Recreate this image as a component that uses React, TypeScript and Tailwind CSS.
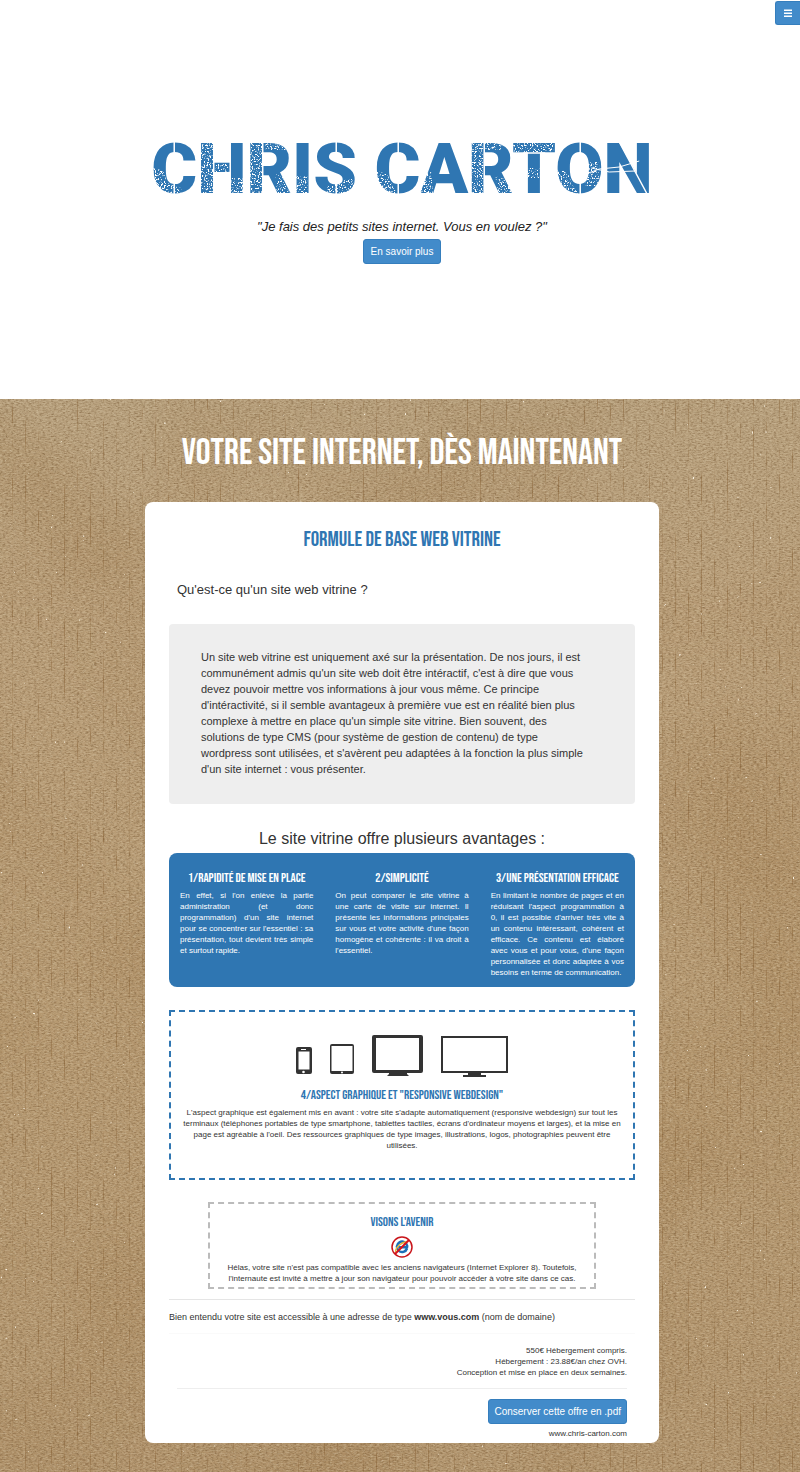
import type { ReactNode } from "react";

function Cardboard() {
  return (
    <svg aria-hidden="true" className="absolute inset-0 -z-10 h-full w-full">
      <defs>
        <linearGradient id="tone" x1="0" y1="0" x2="0" y2="1">
          <stop offset="0" stopColor="#b8a17e" />
          <stop offset="0.2" stopColor="#b99e79" />
          <stop offset="0.6" stopColor="#b69971" />
          <stop offset="1" stopColor="#b2956e" />
        </linearGradient>
        <filter id="grain" x="0" y="0" width="100%" height="100%" colorInterpolationFilters="sRGB">
          <feTurbulence type="fractalNoise" baseFrequency="0.35 0.7" numOctaves="3" seed="4" />
          <feColorMatrix values="0 0 0 0 0.42  0 0 0 0 0.3  0 0 0 0 0.16  1.1 0 0 0 -0.47" />
        </filter>
        <filter id="fibre" x="0" y="0" width="100%" height="100%" colorInterpolationFilters="sRGB">
          <feTurbulence type="fractalNoise" baseFrequency="0.3 0.7" numOctaves="2" seed="21" />
          <feColorMatrix values="0 0 0 0 0.88  0 0 0 0 0.82  0 0 0 0 0.7  1 0 0 0 -0.43" />
        </filter>
        <filter id="stain" x="0" y="0" width="100%" height="100%" colorInterpolationFilters="sRGB">
          <feTurbulence type="fractalNoise" baseFrequency="0.006" numOctaves="2" seed="12" />
          <feColorMatrix values="0 0 0 0 0.55  0 0 0 0 0.38  0 0 0 0 0.18  0.4 0 0 0 -0.16" />
        </filter>
        <filter id="flecks" x="0" y="0" width="100%" height="100%" colorInterpolationFilters="sRGB">
          <feTurbulence type="fractalNoise" baseFrequency="0.22" numOctaves="2" seed="9" />
          <feColorMatrix values="0 0 0 0 0.97  0 0 0 0 0.94  0 0 0 0 0.88  14 0 0 0 -11.3" />
        </filter>
        <filter id="ridges" x="0" y="0" width="100%" height="100%" colorInterpolationFilters="sRGB">
          <feTurbulence type="fractalNoise" baseFrequency="0.3 0.04" numOctaves="3" seed="2" result="n" />
          <feColorMatrix in="n" values="0 0 0 0 1  0 0 0 0 1  0 0 0 0 1  4 0 0 0 -1.8" result="m" />
          <feComposite in="SourceGraphic" in2="m" operator="in" />
        </filter>
        <pattern id="flutes" width="13" height="13" patternUnits="userSpaceOnUse">
          <rect x="12" width="1" height="13" fill="#7d5628" fillOpacity="0.4" />
        </pattern>
      </defs>
      <rect width="100%" height="100%" fill="url(#tone)" />
      <rect width="100%" height="100%" filter="url(#stain)" />
      <rect width="100%" height="100%" filter="url(#grain)" />
      <rect width="100%" height="100%" filter="url(#fibre)" />
      <rect width="100%" height="100%" fill="url(#flutes)" filter="url(#ridges)" />
      <rect width="100%" height="100%" filter="url(#flecks)" />
    </svg>
  );
}

function Logo() {
  return (
    <h1 className="relative font-['Roboto','Liberation_Sans',sans-serif] text-[70px] leading-[70px] font-black whitespace-nowrap text-[#2f76b2]">
      CHRIS CARTON
      <svg aria-hidden="true" viewBox="0 0 501 70" className="absolute inset-0 h-full w-full">
        <defs>
          <filter id="wear" x="0" y="0" width="100%" height="100%" colorInterpolationFilters="sRGB">
            <feTurbulence type="fractalNoise" baseFrequency="0.7" numOctaves="2" seed="7" result="fine" />
            <feColorMatrix in="fine" values="0 0 0 0 1  0 0 0 0 1  0 0 0 0 1  9 0 0 0 -4.9" result="dots" />
            <feComposite in="SourceGraphic" in2="dots" operator="in" />
          </filter>
        </defs>
        <g fill="#fff" filter="url(#wear)">
          <path d="M0 0h501v70H0z" fill="none" />
          <path d="M0 33l12 4 4 12 14 5v14H0zM49 8h13v56H49zM64 30h14v12H64zM80 44h14v20H80zM98 8h13v56H98zM114 8h22v8h-22zM124 40l14 6v20h-12zM144 42h12v22h-12zM176 52l24-8 6 12-10 14-20-2z" />
          <path d="M222 36l14 4 6 14 10 12h-30zM270 40l10-2 2 26h-14zM320 8h12v56h-12zM334 8h16v8h-16zM344 42l18 6v18h-14zM362 8h40v10h-40zM376 34h12v10h-12zM404 34l12 4 6 14 10 14h-28zM434 28h14v24h-14z" />
        </g>
        <g stroke="#fff" strokeWidth="1.500" fill="none">
          <path d="M23 6v17M23 47v20M62.500 6v58M79 6v58M111.500 6v58M185 6v14M185 50v17M247 6v17M247 47v20M333 6v58M429 6v17M429 47v20M372 19h22M468 8l30 56" />
          <path d="M432 41l16-6 20-2 20-6M440 34l18 4 26-1" strokeWidth="1" />
        </g>
      </svg>
    </h1>
  );
}

function Devices() {
  return (
    <svg role="img" aria-label="Téléphone, tablette, écran moyen et écran large" width="214" height="44" viewBox="0 0 214 44" className="mx-auto block">
      <g fill="#333">
        <path fillRule="evenodd" d="M3 12h12a2 2 0 0 1 2 2v23a2 2 0 0 1-2 2H3a2 2 0 0 1-2-2V14a2 2 0 0 1 2-2zM3.500 16.500v18h11v-18zM6 14v1h5v-1z" />
        <circle cx="8.500" cy="37" r="1.300" fill="#fff" />
        <path fillRule="evenodd" d="M37 9h20a2 2 0 0 1 2 2v26a2 2 0 0 1-2 2H37a2 2 0 0 1-2-2V11a2 2 0 0 1 2-2zM36.500 11v25h21V11z" />
        <circle cx="47" cy="37.500" r="1" fill="#fff" />
        <path fillRule="evenodd" d="M79 0h47a2 2 0 0 1 2 2v34a2 2 0 0 1-2 2h-14v1l2 2H92l2-2v-1H79a2 2 0 0 1-2-2V2a2 2 0 0 1 2-2zM81 3v32h43V3z" />
        <path fillRule="evenodd" d="M146 1h67v37h-27v2h5v2h-23v-2h5v-2h-27zM148 3v33h63V3z" />
      </g>
    </svg>
  );
}

function NoExplorer() {
  return (
    <svg role="img" aria-label="Internet Explorer barré" width="22" height="22" viewBox="0 0 22 22" className="mx-auto block">
      <circle cx="11" cy="11" r="10" fill="#fff" />
      <path d="M16 12.500a5.200 5.200 0 1 1 .2-2.500l-.2 1.200H7.500" fill="none" stroke="#1c6fb8" strokeWidth="2.500" />
      <path d="M5 16c-1.500-2 3-9 11-10.500" fill="none" stroke="#e8b53a" strokeWidth="1.500" />
      <path d="M4 18L18 4" stroke="#d9141a" strokeWidth="2" />
      <circle cx="11" cy="11" r="10" fill="none" stroke="#c9151b" strokeWidth="1.500" />
    </svg>
  );
}

const bebas = "font-['Bebas_Neue','Roboto_Condensed',sans-serif]";

function Advantage({ title, children }: { title: string; children: ReactNode }) {
  return (
    <div className="min-w-0 flex-1 px-[11px]">
      <h4 className={`${bebas} text-center text-[13px] leading-4 whitespace-nowrap`}>{title}</h4>
      <p className="mt-1 text-justify text-[8px] leading-[11px]">{children}</p>
    </div>
  );
}

export default function App() {
  return (
    <div className="min-h-screen bg-white font-['Liberation_Sans',Arial,sans-serif] text-[#333]">
      <header className="relative flex h-[399px] flex-col items-center pt-[134px] pl-1">
        <button type="button" aria-label="Menu" className="absolute top-px right-0 flex h-6 w-[25px] items-center justify-center rounded-l-[3px] border border-r-0 border-[#357ebd] bg-[#428bca]">
          <svg width="8" height="8" viewBox="0 0 8 8" fill="#fff">
            <path d="M0 0.500h8v1.500H0zM0 3.500h8v1.500H0zM0 6.500h8v1.500H0z" />
          </svg>
        </button>
        <Logo />
        <p className="mt-[15px] text-[13px] leading-4 text-[#222] italic">"Je fais des petits sites internet. Vous en voulez ?"</p>
        <button type="button" className="mt-1 h-[25px] rounded-[3px] border border-[#357ebd] bg-[#428bca] px-[7px] text-[10px] leading-4 text-white">
          En savoir plus
        </button>
      </header>

      <main className="relative isolate px-4 pt-8 pb-[29px] pl-5">
        <Cardboard />
        <h2 className={`${bebas} pt-1 text-center text-[37px] leading-9 text-white`}>Votre site internet, dès maintenant</h2>

        <article className="mx-auto mt-[31px] max-w-[514px] rounded-[8px] bg-white px-6 pt-7 pb-1">
          <h3 className={`${bebas} text-center text-[21px] leading-5 text-[#2f76b2]`}>Formule de base web vitrine</h3>
          <p className="mt-[30px] px-2 text-[13px] leading-5">Qu'est-ce qu'un site web vitrine ?</p>

          <p className="mt-6 rounded-[4px] bg-[#eee] pt-[25px] pb-[27px] pr-11 pl-8 text-[11px] leading-4">
            Un site web vitrine est uniquement axé sur la présentation. De nos jours, il est communément admis qu'un site web doit être
            intéractif, c'est à dire que vous devez pouvoir mettre vos informations à jour vous même. Ce principe d'intéractivité, si il
            semble avantageux à première vue est en réalité bien plus complexe à mettre en place qu'un simple site vitrine. Bien souvent,
            des solutions de type CMS (pour système de gestion de contenu) de type wordpress sont utilisées, et s'avèrent peu adaptées à
            la fonction la plus simple d'un site internet : vous présenter.
          </p>

          <p className="mt-[25px] text-center text-[16px] leading-5">Le site vitrine offre plusieurs avantages :</p>
          <section className="mt-1 flex rounded-[8px] bg-[#2f76b2] pt-[17px] pb-[9px] text-white">
            <Advantage title="1/Rapidité de mise en place">
              En effet, si l'on enlève la partie administration (et donc programmation) d'un site internet pour se concentrer sur
              l'essentiel : sa présentation, tout devient très simple et surtout rapide.
            </Advantage>
            <Advantage title="2/Simplicité">
              On peut comparer le site vitrine à une carte de visite sur internet. Il présente les informations principales sur vous et
              votre activité d'une façon homogène et cohérente : il va droit à l'essentiel.
            </Advantage>
            <Advantage title="3/Une présentation efficace">
              En limitant le nombre de pages et en réduisant l'aspect programmation à 0, il est possible d'arriver très vite à un contenu
              intéressant, cohérent et efficace. Ce contenu est élaboré avec vous et pour vous, d'une façon personnalisée et donc adaptée à
              vos besoins en terme de communication.
            </Advantage>
          </section>

          <section className="mt-[23px] border-2 border-dashed border-[#2f76b2] px-3 pt-[23px] pb-[27px] text-center">
            <Devices />
            <h4 className={`${bebas} mt-2 text-[13px] leading-4 text-[#2f76b2]`}>4/Aspect graphique et "responsive webdesign"</h4>
            <p className="mt-1 text-[8px] leading-[11px]">
              L'aspect graphique est également mis en avant : votre site s'adapte automatiquement (responsive webdesign) sur tout les
              terminaux (téléphones portables de type smartphone, tablettes tactiles, écrans d'ordinateur moyens et larges), et la mise en
              page est agréable à l'oeil. Des ressources graphiques de type images, illustrations, logos, photographies peuvent être
              utilisées.
            </p>
          </section>

          <section className="mx-[39px] mt-[22px] border-2 border-dashed border-[#bbb] px-4 pt-[10px] pb-[3px] text-center">
            <h4 className={`${bebas} text-[13px] leading-4 text-[#2f76b2]`}>Visons l'avenir</h4>
            <div className="mt-1.5">
              <NoExplorer />
            </div>
            <p className="mt-1 text-[8px] leading-[11px]">
              Hélas, votre site n'est pas compatible avec les anciens navigateurs (Internet Explorer 8). Toutefois, l'internaute est invité
              à mettre à jour son navigateur pour pouvoir accéder à votre site dans ce cas.
            </p>
          </section>

          <p className="mt-[10px] border-t border-[#e5e5e5] pt-3 text-[9px] leading-[10px]">
            Bien entendu votre site est accessible à une adresse de type <strong>www.vous.com</strong> (nom de domaine)
          </p>

          <div className="mt-[11px] border-t border-[#fafafa] px-2 pt-[11px] text-right text-[8px] leading-[11px]">
            <p>
              550€ Hébergement compris.
              <br />
              Hébergement : 23.88€/an chez OVH.
              <br />
              Conception et mise en place en deux semaines.
            </p>
            <hr className="mt-2.5 border-[#eee]" />
            <button type="button" className="mt-2.5 h-[25px] rounded-[3px] border border-[#357ebd] bg-[#428bca] px-[5px] text-[10px] leading-4 text-white">
              Conserver cette offre en .pdf
            </button>
            <p className="mt-1">
              <a href="http://www.chris-carton.com">www.chris-carton.com</a>
            </p>
          </div>
        </article>
      </main>
    </div>
  );
}
